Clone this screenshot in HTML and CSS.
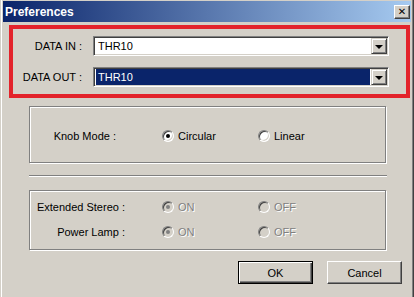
FILE: index.html
```html
<!DOCTYPE html>
<html>

<head>
    <meta charset="utf-8">
    <title>Preferences</title>
    <link rel="stylesheet" href="styles.css">
</head>

<body>
    <div class="window">
        <div class="titlebar">
            <span class="title">Preferences</span>
            <button class="close">&#x2715;</button>
        </div>
        <div class="content">
            <div class="ports">
                <label class="port-label">DATA IN :</label>
                <div class="combo">
                    <span class="combo-text">THR10</span>
                    <span class="combo-btn"><span class="arrow"></span></span>
                </div>
                <label class="port-label">DATA OUT :</label>
                <div class="combo">
                    <span class="combo-text selected">THR10</span>
                    <span class="combo-btn"><span class="arrow"></span></span>
                </div>
            </div>

            <div class="group knob">
                <div class="opt-row">
                    <span class="opt-label knob-label">Knob Mode :</span>
                    <span class="radio-item"><span class="radio checked"></span>Circular</span>
                    <span class="radio-item"><span class="radio"></span>Linear</span>
                </div>
            </div>

            <div class="separator"></div>

            <div class="group extras">
                <div class="opt-row">
                    <span class="opt-label">Extended Stereo :</span>
                    <span class="radio-item disabled"><span class="radio checked"></span>ON</span>
                    <span class="radio-item disabled"><span class="radio"></span>OFF</span>
                </div>
                <div class="opt-row">
                    <span class="opt-label">Power Lamp :</span>
                    <span class="radio-item disabled"><span class="radio checked"></span>ON</span>
                    <span class="radio-item disabled"><span class="radio"></span>OFF</span>
                </div>
            </div>

            <div class="buttons">
                <button class="btn default">OK</button>
                <button class="btn">Cancel</button>
            </div>
        </div>
    </div>
</body>

</html>
```

FILE: styles.css
```css
body {
    margin: 0;
    padding: 0;
    background: #d4d0c8;
    font-family: "Liberation Sans", Arial, sans-serif;
    font-size: 11px;
    color: #000;
}

.window {
    width: 414px;
    height: 297px;
    box-sizing: border-box;
    background: #d4d0c8;
    border-left: 1px solid #d4d0c8;
    border-right: 1px solid #404040;
    box-shadow: inset 1px 0 0 #fff, inset -1px 0 0 #808080;
    padding: 1px 2px 0 2px;
    display: flex;
    flex-direction: column;
}

.titlebar {
    height: 21px;
    display: flex;
    align-items: center;
    justify-content: space-between;
    background: linear-gradient(to right, #0a246a, #a6caf0);
    padding: 0 1px 0 2px;
}

.title {
    color: #fff;
    font-weight: bold;
    font-size: 12px;
    font-family: "Liberation Sans", Arial, sans-serif;
}

.close {
    width: 16px;
    height: 14px;
    padding: 0;
    background: #d4d0c8;
    border: 1px solid;
    border-color: #fff #404040 #404040 #fff;
    box-shadow: inset -1px -1px 0 #808080;
    font-size: 10px;
    font-weight: bold;
    line-height: 12px;
    color: #000;
    font-family: "DejaVu Sans", sans-serif;
}

.content {
    display: flex;
    flex-direction: column;
    padding: 0 0 0 6px;
}

.ports {
    margin-top: 3px;
    width: 401px;
    height: 73px;
    box-sizing: border-box;
    border: 4px solid #e3232b;
    padding: 7px 0 0 0;
    display: grid;
    grid-template-columns: 69px 296px;
    column-gap: 11px;
    row-gap: 11px;
    align-items: center;
    grid-auto-rows: 20px;
}

.port-label {
    text-align: right;
}

.combo {
    height: 20px;
    box-sizing: border-box;
    border: 1px solid;
    border-color: #808080 #fff #fff #808080;
    box-shadow: inset 1px 1px 0 #404040, inset -1px -1px 0 #d4d0c8;
    background: #fff;
    display: flex;
    align-items: center;
    padding: 1px;
}

.combo-text {
    flex: 1;
    height: 16px;
    line-height: 16px;
    padding-left: 2px;
    margin-left: 1px;
}

.combo-text.selected {
    background: #0a246a;
    color: #fff;
    margin-right: 1px;
}

.combo-btn {
    width: 16px;
    height: 16px;
    box-sizing: border-box;
    background: #d4d0c8;
    border: 1px solid;
    border-color: #d4d0c8 #404040 #404040 #d4d0c8;
    box-shadow: inset 1px 1px 0 #fff, inset -1px -1px 0 #808080;
    display: flex;
    align-items: center;
    justify-content: center;
}

.arrow {
    width: 0;
    height: 0;
    border-left: 4px solid transparent;
    border-right: 4px solid transparent;
    border-top: 4px solid #000;
    margin-top: 1px;
}

.group {
    margin-left: 20px;
    width: 357px;
    box-sizing: border-box;
    border: 1px solid #808080;
    box-shadow: inset 1px 1px 0 #fff, 1px 1px 0 #fff;
    display: flex;
    flex-direction: column;
}

.knob {
    margin-top: 8px;
    height: 57px;
    justify-content: center;
    padding-top: 2px;
}

.separator {
    margin: 12px 0 0 20px;
    width: 358px;
    height: 1px;
    background: #808080;
    box-shadow: 0 1px 0 #fff;
}

.extras {
    margin-top: 14px;
    height: 60px;
    padding-top: 9px;
    gap: 11px;
}

.opt-row {
    display: flex;
    align-items: center;
    height: 14px;
}

.opt-label {
    width: 95px;
    text-align: right;
    margin-right: 37px;
}

.knob-label {
    width: 86px;
    margin-right: 46px;
}

.radio-item {
    display: flex;
    align-items: center;
    width: 96px;
    gap: 4px;
}

.radio {
    width: 12px;
    height: 12px;
    box-sizing: border-box;
    border-radius: 50%;
    border: 1px solid;
    border-color: #808080 #fff #fff #808080;
    box-shadow: inset 1px 1px 0 #404040, inset -1px -1px 0 #d4d0c8;
    background: #fff;
    display: flex;
    align-items: center;
    justify-content: center;
}

.radio.checked::after {
    content: "";
    width: 4px;
    height: 4px;
    border-radius: 50%;
    background: #000;
}

.disabled {
    color: #808080;
    text-shadow: 1px 1px 0 #fff;
}

.disabled .radio {
    background: #d4d0c8;
}

.disabled .radio.checked::after {
    background: #808080;
}

.buttons {
    display: flex;
    justify-content: flex-end;
    gap: 14px;
    margin-top: 11px;
    padding-right: 9px;
}

.btn {
    width: 75px;
    height: 23px;
    box-sizing: border-box;
    background: #d4d0c8;
    border: 1px solid;
    border-color: #fff #404040 #404040 #fff;
    box-shadow: inset -1px -1px 0 #808080;
    font-family: "Liberation Sans", Arial, sans-serif;
    font-size: 11px;
    color: #000;
    padding: 0;
}

.btn.default {
    border: 1px solid #000;
    box-shadow: inset 1px 1px 0 #fff, inset -1px -1px 0 #404040, inset -2px -2px 0 #808080;
}
```
